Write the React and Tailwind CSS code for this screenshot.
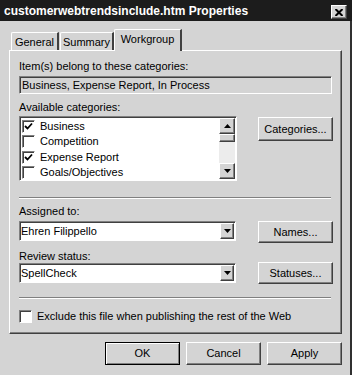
const raised =
  "border border-t-white border-l-white border-r-[#404040] border-b-[#404040] shadow-[inset_-1px_-1px_0_#808080] bg-[#d4d4d4]";
const sunken =
  "border border-t-[#808080] border-l-[#808080] border-r-white border-b-white shadow-[inset_1px_1px_0_#404040]";

function Check({ checked }) {
  return (
    <div className="w-[13px] h-[13px] bg-white border border-t-[#808080] border-l-[#808080] border-r-white border-b-white shadow-[inset_1px_1px_0_#404040] flex items-center justify-center shrink-0">
      {checked && (
        <svg width="9" height="9" viewBox="0 0 9 9">
          <path d="M1 4 L3.5 6.5 L8 1.5" stroke="#000" strokeWidth="1.8" fill="none" />
        </svg>
      )}
    </div>
  );
}

function Arrow({ up }) {
  return (
    <svg width="7" height="4" viewBox="0 0 7 4">
      {up ? <path d="M0 4 L3.5 0 L7 4 Z" fill="#000" /> : <path d="M0 0 L7 0 L3.5 4 Z" fill="#000" />}
    </svg>
  );
}

function Button({ children, className = "" }) {
  return (
    <div className={`${raised} w-[75px] flex items-center justify-center leading-none ${className}`}>
      {children}
    </div>
  );
}

function Combo({ value }) {
  return (
    <div className={`${sunken} bg-white w-[217px] h-[20px] flex items-stretch`}>
      <div className="flex-1 pl-[1px] flex items-center leading-none">{value}</div>
      <div className={`${raised} w-[14px] flex items-center justify-center mr-[1px] my-[1px]`}>
        <Arrow />
      </div>
    </div>
  );
}

export default function App() {
  const cats = [
    ["Business", true],
    ["Competition", false],
    ["Expense Report", true],
    ["Goals/Objectives", false],
  ];
  return (
    <div className="w-[352px] h-[375px] bg-[#d4d4d4] flex flex-col font-['Liberation_Sans',Arial,sans-serif] text-[11px] text-black overflow-hidden">
      {/* Title bar */}
      <div className="h-[21px] bg-[#1c1c1c] flex items-start justify-between shrink-0">
        <div className="pl-[4px] pt-[3px] text-white font-bold text-[12px] leading-[16px]">
          customerwebtrendsinclude.htm Properties
        </div>
        <div className={`${raised} mt-[5px] mr-[5px] w-[16px] h-[14px] flex items-center justify-center`}>
          <svg width="8" height="7" viewBox="0 0 8 7">
            <path d="M0.5 0 L7.5 7 M7.5 0 L0.5 7" stroke="#000" strokeWidth="2" />
          </svg>
        </div>
      </div>

      {/* Body */}
      <div className="flex-1 flex flex-col pl-[9px] pr-[8px] border-r-2 border-r-[#303030]">
        {/* Tabs */}
        <div className="mt-[8px] pl-[2px] flex items-end h-[21px] relative z-10">
          <div className="w-[48px] h-[18px] border-t border-l border-t-white border-l-white border-r-2 border-r-[#404040] rounded-tl-[2px] flex items-center justify-center pt-[1px]">
            General
          </div>
          <div className="ml-[1px] w-[54px] h-[18px] border-t border-l border-t-white border-l-white border-r-2 border-r-[#404040] rounded-tl-[2px] flex items-center justify-center pt-[1px]">
            Summary
          </div>
          <div className="w-[68px] h-[22px] -mb-px bg-[#d4d4d4] border-t border-l border-t-white border-l-white border-r-2 border-r-[#404040] rounded-tl-[2px] flex items-center justify-center pb-[2px]">
            Workgroup
          </div>
        </div>

        {/* Panel */}
        <div className="h-[284px] border border-t-white border-l-white border-r-[#404040] border-b-[#404040] shadow-[inset_-1px_-1px_0_#808080] flex flex-col pl-[9px]">
          <div className="mt-[8px] leading-[14px]">Item(s) belong to these categories:</div>
          <div className={`${sunken} mt-[3px] w-[313px] h-[18px] flex items-center pl-[2px] leading-none`}>
            Business, Expense Report, In Process
          </div>
          <div className="mt-[6px] leading-[14px]">Available categories:</div>
          <div className="mt-[2px] flex items-start">
            <div className={`${sunken} bg-white w-[218px] h-[65px] flex`}>
              <div className="flex-1 flex flex-col pt-[2px] pl-[2px]">
                {cats.map(([name, c]) => (
                  <div key={name} className="h-[16px] flex items-center">
                    <Check checked={c} />
                    <span className="ml-[5px] leading-none">{name}</span>
                  </div>
                ))}
              </div>
              <div className="w-[16px] mr-[1px] my-[1px] flex flex-col bg-[#ececec]">
                <div className={`${raised} h-[16px] flex items-center justify-center`}>
                  <Arrow up />
                </div>
                <div className={`${raised} h-[8px]`} />
                <div className="flex-1" />
                <div className={`${raised} h-[16px] flex items-center justify-center`}>
                  <Arrow />
                </div>
              </div>
            </div>
            <Button className="ml-[21px] mt-[1px] h-[24px]">Categories...</Button>
          </div>

          <div className="mt-[16px] w-[312px] border-t border-t-[#808080] border-b border-b-white" />

          <div className="mt-[5px] leading-[14px]">Assigned to:</div>
          <div className="mt-[3px] flex items-start">
            <Combo value="Ehren Filippello" />
            <Button className="ml-[22px] h-[22px]">Names...</Button>
          </div>
          <div className="mt-[6px] leading-[14px]">Review status:</div>
          <div className="flex items-start">
            <Combo value="SpellCheck" />
            <Button className="ml-[22px] h-[22px] -mt-px">Statuses...</Button>
          </div>

          <div className="mt-[13px] w-[312px] border-t border-t-[#808080] border-b border-b-white" />

          <div className="mt-[11px] flex items-center">
            <Check checked={false} />
            <span className="ml-[5px] leading-none">Exclude this file when publishing the rest of the Web</span>
          </div>
        </div>

        {/* Bottom buttons */}
        <div className="mt-[8px] flex justify-end gap-[6px]">
          <div className="w-[75px] h-[23px] border border-black shadow-[inset_1px_1px_0_#fff,inset_-1px_-1px_0_#808080] flex items-center justify-center leading-none">
            OK
          </div>
          <Button className="h-[23px]">Cancel</Button>
          <Button className="h-[23px]">Apply</Button>
        </div>
      </div>
    </div>
  );
}
